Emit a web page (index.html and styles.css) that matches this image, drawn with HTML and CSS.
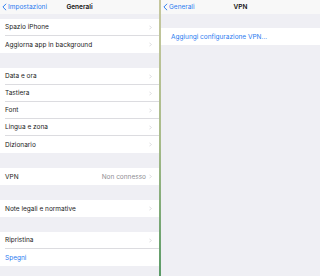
FILE: index.html
```html
<!DOCTYPE html>
<html>
<head>
<meta charset="utf-8">
<link rel="stylesheet" href="styles.css">
</head>
<body>
<div class="split">
  <div class="pane left">
    <div class="nav">
      <span class="back"><svg class="bchev" viewBox="0 0 6 10" width="5" height="8"><path d="M5 1 L1 5 L5 9" fill="none" stroke="currentColor" stroke-width="1.2"/></svg>Impostazioni</span>
      <span class="title">Generali</span>
    </div>
    <div class="gap small"></div>
    <div class="group">
      <div class="row"><span class="label">Spazio iPhone</span><svg class="chev" viewBox="0 0 4 6" width="3" height="5"><path d="M0.5 0.5 L3 3 L0.5 5.5" fill="none" stroke="currentColor" stroke-width="0.7"/></svg></div>
      <div class="row"><span class="label">Aggiorna app in background</span><svg class="chev" viewBox="0 0 4 6" width="3" height="5"><path d="M0.5 0.5 L3 3 L0.5 5.5" fill="none" stroke="currentColor" stroke-width="0.7"/></svg></div>
    </div>
    <div class="gap"></div>
    <div class="group">
      <div class="row"><span class="label">Data e ora</span><svg class="chev" viewBox="0 0 4 6" width="3" height="5"><path d="M0.5 0.5 L3 3 L0.5 5.5" fill="none" stroke="currentColor" stroke-width="0.7"/></svg></div>
      <div class="row"><span class="label">Tastiera</span><svg class="chev" viewBox="0 0 4 6" width="3" height="5"><path d="M0.5 0.5 L3 3 L0.5 5.5" fill="none" stroke="currentColor" stroke-width="0.7"/></svg></div>
      <div class="row"><span class="label">Font</span><svg class="chev" viewBox="0 0 4 6" width="3" height="5"><path d="M0.5 0.5 L3 3 L0.5 5.5" fill="none" stroke="currentColor" stroke-width="0.7"/></svg></div>
      <div class="row"><span class="label">Lingua e zona</span><svg class="chev" viewBox="0 0 4 6" width="3" height="5"><path d="M0.5 0.5 L3 3 L0.5 5.5" fill="none" stroke="currentColor" stroke-width="0.7"/></svg></div>
      <div class="row"><span class="label">Dizionario</span><svg class="chev" viewBox="0 0 4 6" width="3" height="5"><path d="M0.5 0.5 L3 3 L0.5 5.5" fill="none" stroke="currentColor" stroke-width="0.7"/></svg></div>
    </div>
    <div class="gap"></div>
    <div class="group">
      <div class="row"><span class="label">VPN</span><span class="value">Non connesso</span><svg class="chev" viewBox="0 0 4 6" width="3" height="5"><path d="M0.5 0.5 L3 3 L0.5 5.5" fill="none" stroke="currentColor" stroke-width="0.7"/></svg></div>
    </div>
    <div class="gap"></div>
    <div class="group">
      <div class="row"><span class="label">Note legali e normative</span><svg class="chev" viewBox="0 0 4 6" width="3" height="5"><path d="M0.5 0.5 L3 3 L0.5 5.5" fill="none" stroke="currentColor" stroke-width="0.7"/></svg></div>
    </div>
    <div class="gap"></div>
    <div class="group">
      <div class="row"><span class="label">Ripristina</span><svg class="chev" viewBox="0 0 4 6" width="3" height="5"><path d="M0.5 0.5 L3 3 L0.5 5.5" fill="none" stroke="currentColor" stroke-width="0.7"/></svg></div>
      <div class="row"><span class="label link">Spegni</span></div>
    </div>
  </div>
  <div class="divider"></div>
  <div class="pane right">
    <div class="nav">
      <span class="back"><svg class="bchev" viewBox="0 0 6 10" width="5" height="8"><path d="M5 1 L1 5 L5 9" fill="none" stroke="currentColor" stroke-width="1.2"/></svg>Generali</span>
      <span class="title">VPN</span>
    </div>
    <div class="gap tall"></div>
    <div class="group">
      <div class="row single"><span class="label link">Aggiungi configurazione VPN...</span></div>
    </div>
  </div>
</div>
</body>
</html>
```
FILE: styles.css
```css
html, body {
  margin: 0;
  padding: 0;
  width: 320px;
  height: 276px;
  overflow: hidden;
  background: #efeff4;
  font-family: "Inter", "Liberation Sans", sans-serif;
  color: #1a1a1a;
}
.split {
  display: flex;
  height: 276px;
}
.pane {
  background: #efeff4;
  display: flex;
  flex-direction: column;
}
.left { width: 159px; }
.right { flex: 1; }
.divider {
  width: 2px;
  background: linear-gradient(to bottom, #c6c79e, #a9bb8a 50%, #5a9a66);
}
.nav {
  height: 14px;
  background: #f8f8f8;
  position: relative;
  display: flex;
  align-items: center;
  font-size: 6.5px;
}
.back {
  color: #2a7bf0;
  display: flex;
  align-items: center;
  gap: 1px;
  padding-left: 2px;
}
.bchev { display: block; }
.title {
  position: absolute;
  left: 0;
  right: 0;
  text-align: center;
  font-weight: 600;
  color: #111;
  pointer-events: none;
}
.gap { height: 15px; }
.gap.small { height: 5px; }
.gap.tall { height: 14px; }
.group {
  background: #fff;
}
.row {
  height: 17px;
  display: flex;
  align-items: center;
  margin-left: 5px;
  padding-right: 7px;
  font-size: 6.5px;
  border-bottom: 0.5px solid #dcdce0;
  box-sizing: border-box;
}
.row:last-child { border-bottom: none; }
.row.single { margin-left: 10px; }
.label { flex: 1; }
.link { color: #2a7bf0; }
.value { color: #8e8e93; margin-right: 3px; }
.chev {
  color: #bdbdc2;
  display: block;
  flex: none;
}
```
